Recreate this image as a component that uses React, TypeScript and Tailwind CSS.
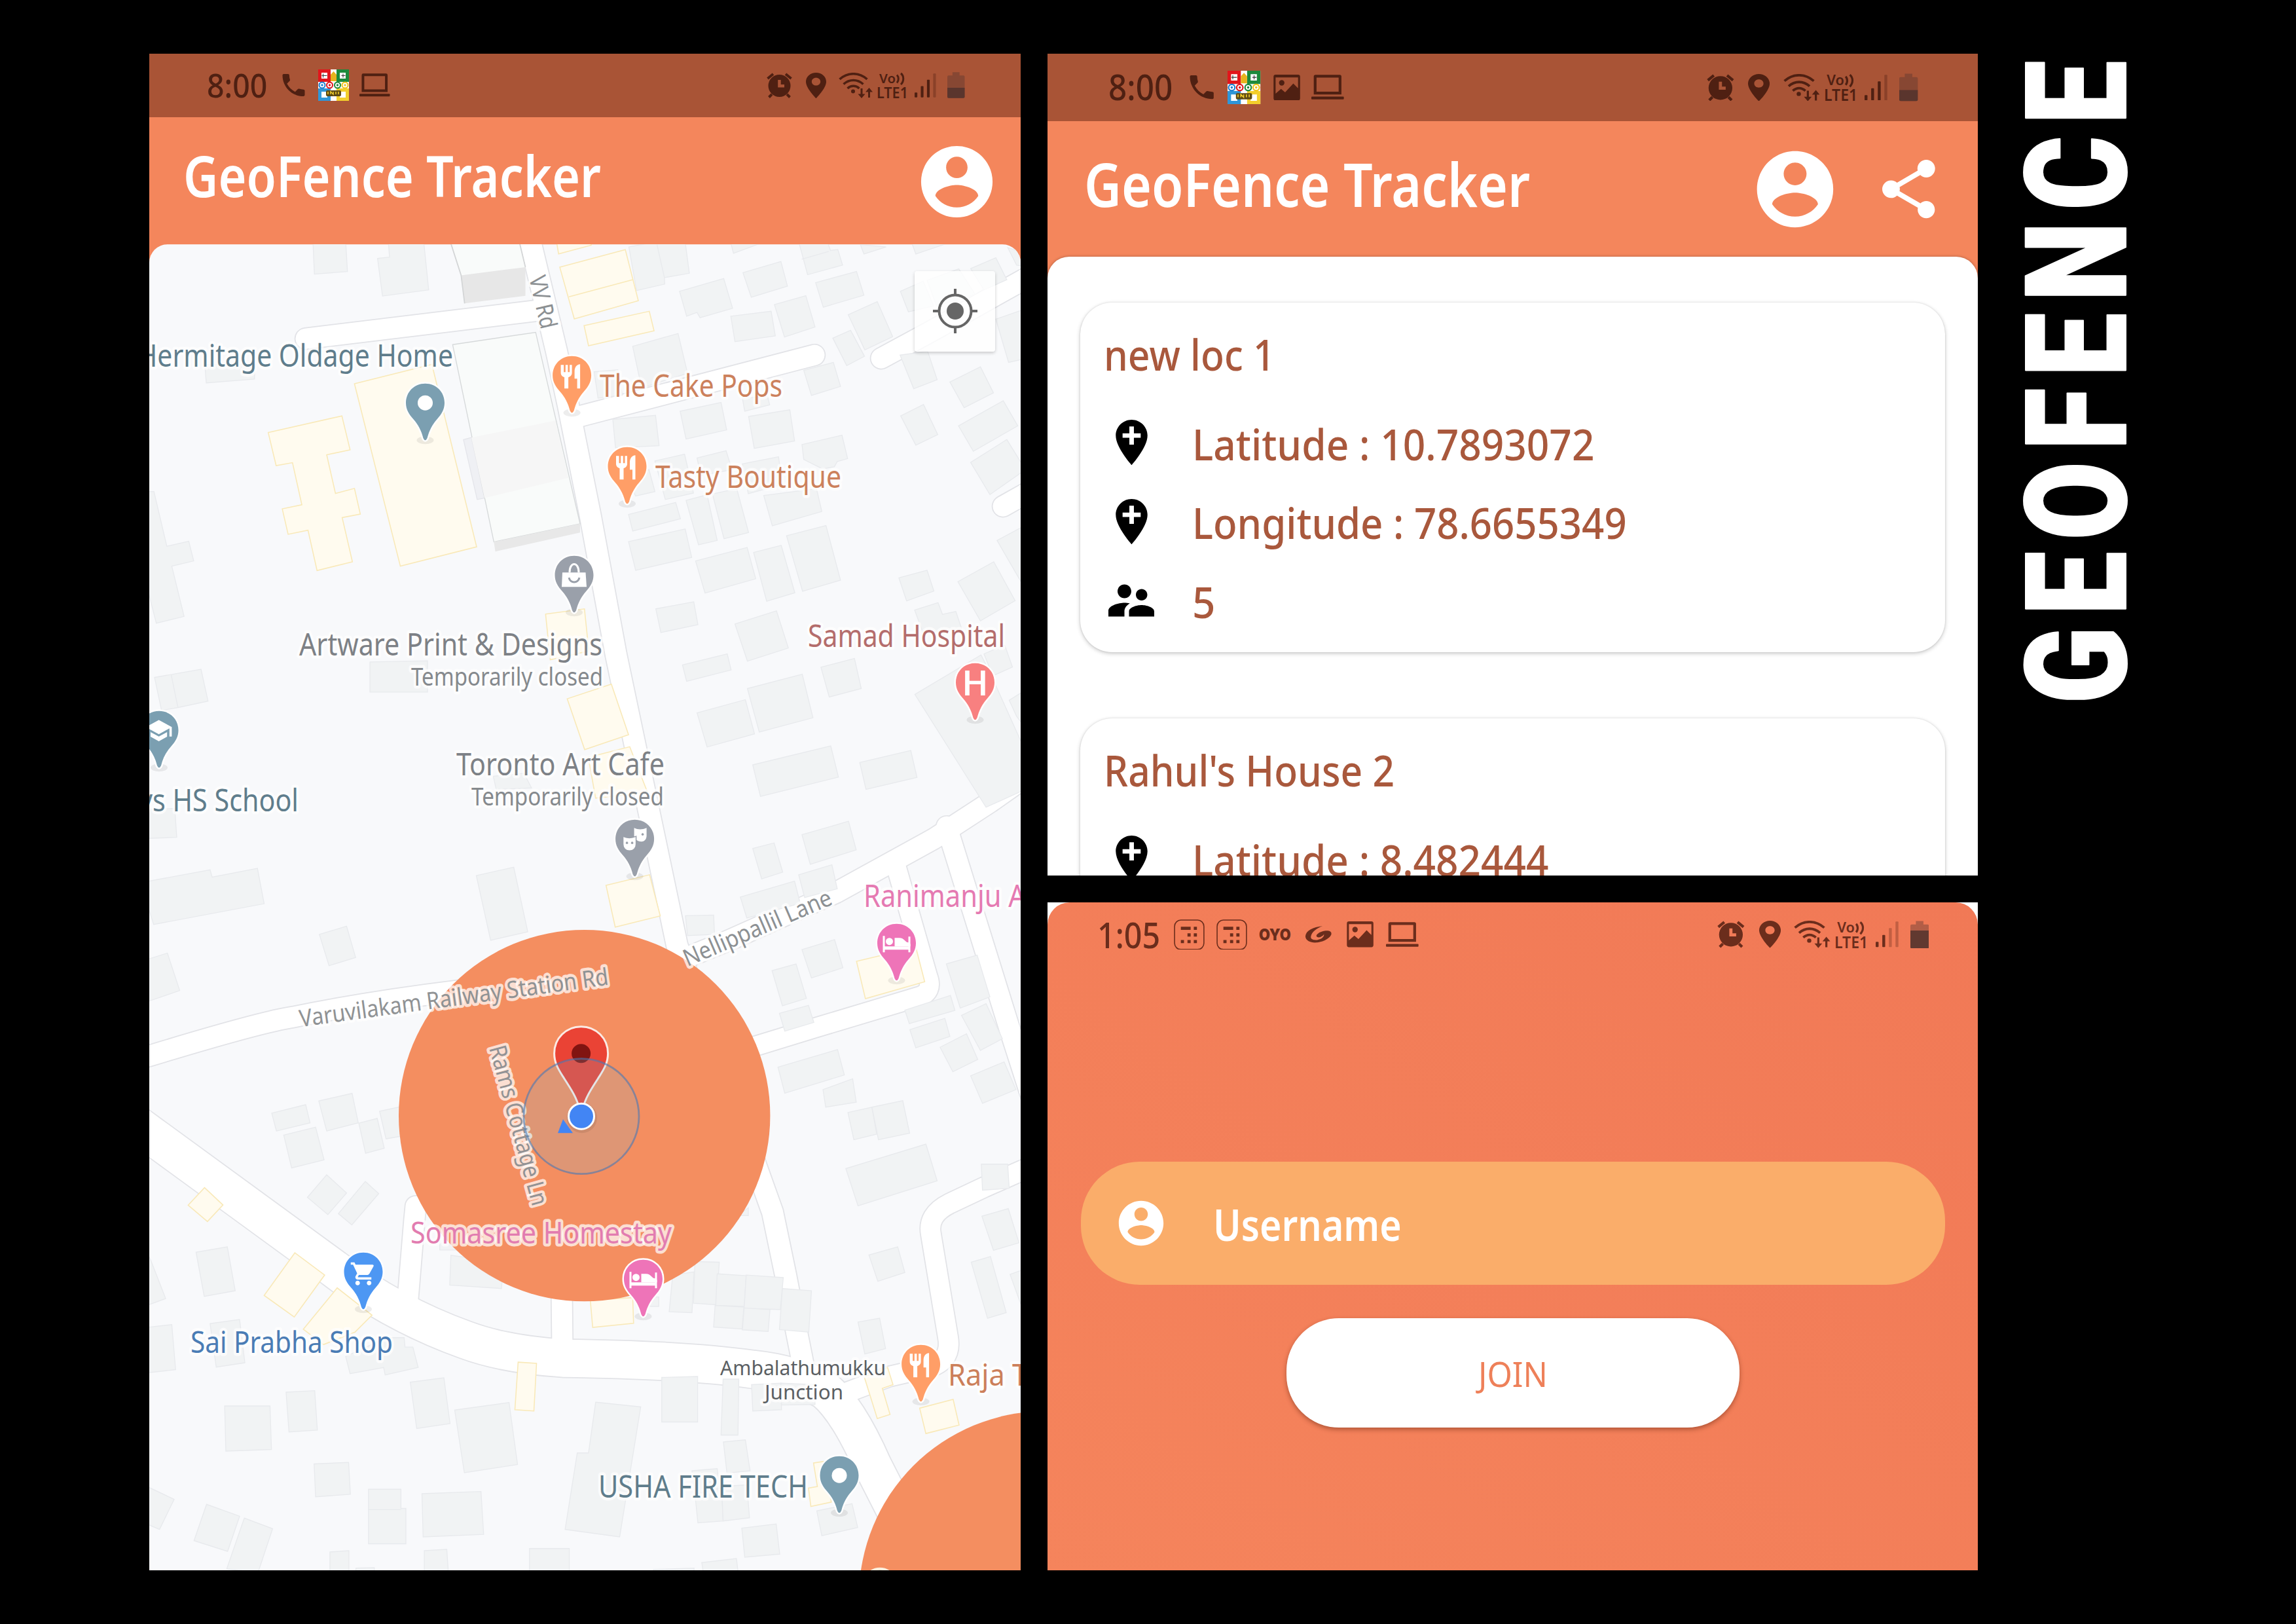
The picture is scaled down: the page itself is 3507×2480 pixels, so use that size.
import { useLayoutEffect, useRef, useState } from "react";
import type { ReactNode } from "react";

const FONT = "'Noto Sans', 'Open Sans', sans-serif";

/* One line of text, condensed horizontally so that it fills its box. */
function FitText({ children, className }: { children: string; className: string }) {
  const box = useRef<HTMLSpanElement>(null);
  const line = useRef<HTMLSpanElement>(null);
  const [scale, setScale] = useState(1);
  useLayoutEffect(() => {
    if (box.current && line.current) {
      setScale(box.current.clientWidth / line.current.offsetWidth);
    }
  }, []);
  return (
    <span ref={box} className={`block shrink-0 leading-none ${className}`}>
      <span
        ref={line}
        className="inline-block origin-left whitespace-nowrap"
        style={{ transform: `scaleX(${scale})` }}
      >
        {children}
      </span>
    </span>
  );
}

/* ---------- shared icons ---------- */

function AccountIcon({ className }: { className: string }) {
  return (
    <svg viewBox="0 0 24 24" className={className} fill="currentColor">
      <path d="M12 2C6.48 2 2 6.48 2 12s4.48 10 10 10 10-4.48 10-10S17.52 2 12 2zm0 3c1.66 0 3 1.34 3 3s-1.34 3-3 3-3-1.34-3-3 1.34-3 3-3zm0 14.2c-2.5 0-4.71-1.28-6-3.22.03-1.99 4-3.08 6-3.08 1.99 0 5.97 1.09 6 3.08-1.29 1.94-3.5 3.22-6 3.22z" />
    </svg>
  );
}

function ShareIcon({ className }: { className: string }) {
  return (
    <svg viewBox="3 2 18 20" className={className} fill="currentColor">
      <path d="M18 16.08c-.76 0-1.44.3-1.96.77L8.91 12.7c.05-.23.09-.46.09-.7s-.04-.47-.09-.7l7.05-4.11c.54.5 1.25.81 2.04.81 1.66 0 3-1.34 3-3s-1.34-3-3-3-3 1.34-3 3c0 .24.04.47.09.7L8.04 9.81C7.5 9.31 6.79 9 6 9c-1.66 0-3 1.34-3 3s1.34 3 3 3c.79 0 1.5-.31 2.04-.81l7.12 4.16c-.05.21-.08.43-.08.65 0 1.61 1.31 2.92 2.92 2.92s2.92-1.31 2.92-2.92-1.31-2.92-2.92-2.92z" />
    </svg>
  );
}

function AddLocationIcon() {
  return (
    <svg viewBox="0 0 24 24" className="mb-[4px] size-[83px] shrink-0" fill="#000">
      <path d="M12 2C8.14 2 5 5.14 5 9c0 5.25 7 13 7 13s7-7.75 7-13c0-3.86-3.14-7-7-7zm4 8h-3v3h-2v-3H8V8h3V5h2v3h3v2z" />
    </svg>
  );
}

function PeopleIcon() {
  return (
    <svg viewBox="0 0 24 24" className="mb-[3px] size-[84px] shrink-0" fill="#000">
      <path d="M16.5 12c1.38 0 2.49-1.12 2.49-2.5S17.88 7 16.5 7C15.12 7 14 8.12 14 9.5s1.12 2.5 2.5 2.5zM9 11c1.66 0 2.99-1.34 2.99-3S10.66 5 9 5C7.34 5 6 6.34 6 8s1.34 3 3 3zm7.5 3c-1.83 0-5.5.92-5.5 2.75V19h11v-2.25c0-1.83-3.67-2.75-5.5-2.75zM9 13c-2.33 0-7 1.17-7 3.5V19h7v-2.25c0-.85.33-2.34 2.37-3.47C10.5 13.1 9.66 13 9 13z" />
    </svg>
  );
}

/* ---------- status bar (sized in em so it scales with its panel) ---------- */

function PhoneIcon() {
  return (
    <svg viewBox="3 3 18 18" className="h-[0.34em] w-[0.35em]" fill="currentColor">
      <path d="M6.62 10.79c1.44 2.83 3.76 5.14 6.59 6.59l2.2-2.2c.27-.27.67-.36 1.02-.24 1.12.37 2.33.57 3.57.57.55 0 1 .45 1 1V20c0 .55-.45 1-1 1-9.39 0-17-7.61-17-17 0-.55.45-1 1-1h3.5c.55 0 1 .45 1 1 0 1.25.2 2.45.57 3.57.11.35.03.74-.25 1.02l-2.2 2.2z" />
    </svg>
  );
}

function LudoIcon() {
  return (
    <svg viewBox="0 0 47 48" className="h-[0.48em] w-[0.47em]">
      <rect width="47" height="48" fill="#fff" />
      <rect width="19" height="19" fill="#e2151b" />
      <rect x="28" width="19" height="19" fill="#1d8a3c" />
      <rect y="29" width="19" height="19" fill="#2f96d8" />
      <rect x="28" y="29" width="19" height="19" fill="#f3cf2c" />
      <path d="M5 5h9v9H5zM33 5h9v9h-9zM5 34h9v9H5zM33 34h9v9h-9z" fill="#fff" />
      <path d="M7.500 6.500v6M5.500 9.500h8M35.500 9.500h6M38 6.500v6" stroke="#333" strokeWidth="1" />
      <path d="M19 8l4.500-5 4.500 5v10h-9z" fill="#e8b21d" />
      <circle cx="6" cy="24" r="5.500" fill="#1d7fd0" />
      <circle cx="17.500" cy="24" r="5.500" fill="#e2151b" />
      <circle cx="29.500" cy="24" r="5.500" fill="#1d8a3c" />
      <circle cx="41" cy="24" r="5.500" fill="#f0c419" />
      <g fill="none" stroke="#fff" strokeWidth="1.800">
        <circle cx="6" cy="24" r="2.600" />
        <circle cx="17.500" cy="24" r="2.600" />
        <circle cx="29.500" cy="24" r="2.600" />
        <circle cx="41" cy="24" r="2.600" />
      </g>
      <rect x="12" y="32" width="23" height="9" rx="2" fill="#5d4a12" />
      <path d="M15 38v-4M19 38v-4l4 4v-4M27 38v-4M31 34v4" stroke="#f3cf2c" strokeWidth="1.500" />
    </svg>
  );
}

function LaptopIcon() {
  return (
    <svg viewBox="0 0 47 36" className="h-[0.36em] w-[0.465em]" fill="currentColor">
      <path fillRule="evenodd" d="M6 0h35a2.500 2.500 0 0 1 2.500 2.500v26H3.500v-26A2.500 2.500 0 0 1 6 0zm1.500 4v20.500h32V4z" />
      <rect y="31.500" width="47" height="4" rx="1" />
    </svg>
  );
}

function PictureIcon() {
  return (
    <svg viewBox="0 0 39 38" className="h-[0.37em] w-[0.385em]" fill="currentColor">
      <path
        fillRule="evenodd"
        d="M3 0h33a3 3 0 0 1 3 3v32a3 3 0 0 1-3 3H3a3 3 0 0 1-3-3V3a3 3 0 0 1 3-3zm0 4v24l8-7 6 5 12-13 7 7V4z"
      />
      <circle cx="12" cy="12" r="4" />
    </svg>
  );
}

function KeypadIcon() {
  return (
    <svg viewBox="0 0 44 44" className="h-[0.44em] w-[0.44em]" fill="currentColor">
      <rect x="1" y="1" width="42" height="42" rx="9" fill="none" stroke="currentColor" strokeWidth="1.500" />
      <rect x="10" y="10.500" width="14" height="4.500" />
      <path d="M28.500 10.500H33V15h-4.500zM19.500 20H24v4.500h-4.500zM28.500 20H33v4.500h-4.500zM10 29.500h4.500V34H10zM19.500 29.500H24V34h-4.500zM28.500 29.500H33V34h-4.500z" />
    </svg>
  );
}

function SwirlIcon() {
  return (
    <svg viewBox="0 0 40 25" className="h-[0.25em] w-[0.39em]" fill="currentColor">
      <path d="M26 0C12 1 2 7 1 14c-1 7 8 11 17 10 11-1 21-8 21-13 0-4-5-5-10-4-6 1-11 4-12 7 0 2 3 3 6 2 2-1 4-2 5-4 1 3-3 7-9 8-6 1-11-1-10-5C10 9 17 3 26 0z" />
    </svg>
  );
}

function AlarmIcon() {
  return (
    <svg viewBox="0 0 41 39" className="h-[0.39em] w-[0.41em]" fill="none" stroke="currentColor">
      <path d="M2.500 9 11 2M38.500 9 30 2" strokeWidth="4" />
      <path d="M9 33l-4.500 4.500M32 33l4.500 4.500" strokeWidth="4" />
      <path
        fillRule="evenodd"
        stroke="none"
        fill="currentColor"
        d="M20.500 3a17 17 0 1 1 0 34 17 17 0 0 1 0-34zm-2.300 8v11.500H28V18h-5.300v-7z"
      />
    </svg>
  );
}

function PlaceIcon() {
  return (
    <svg viewBox="5 2 14 20" preserveAspectRatio="none" className="h-[0.39em] w-[0.31em]" fill="currentColor">
      <path d="M12 2C8.130 2 5 5.130 5 9c0 5.250 7 13 7 13s7-7.750 7-13c0-3.870-3.130-7-7-7zm0 10c-1.700 0-3-1.300-3-3s1.300-3 3-3 3 1.300 3 3-1.300 3-3 3z" />
    </svg>
  );
}

function WifiIcon() {
  return (
    <svg viewBox="0 0 52 39" className="h-[0.39em] w-[0.52em]" fill="none" stroke="currentColor" strokeWidth="3.600">
      <path d="M1.500 10C14-1 31-1 43.500 10" />
      <path d="M7.500 17.500c9-8 21-8 30 0" />
      <path d="M13.500 24c5.500-5 12.500-5 18 0" />
      <circle cx="22" cy="28.500" r="3" fill="currentColor" stroke="none" />
      <path d="M35 24v12M46.500 38V26" strokeWidth="3" />
      <path d="M29.500 32.500h11L35 39zM41 29.500h11L46.500 23z" fill="currentColor" stroke="none" />
    </svg>
  );
}

function VoLteIcon() {
  return (
    <svg viewBox="0 0 48 40" className="h-[0.4em] w-[0.48em] overflow-visible" fill="currentColor">
      <text x="4" y="17" fontFamily={FONT} fontWeight="600" fontSize="20" textLength="25" lengthAdjust="spacingAndGlyphs">
        Vo
      </text>
      <path d="M31 5.500c3 3 3 9 0 12M37 3c5 4 5 12 0 17" transform="translate(0 -1)" fill="none" stroke="currentColor" strokeWidth="3" />
      <text x="0" y="39.500" fontFamily={FONT} fontWeight="600" fontSize="23" textLength="48" lengthAdjust="spacingAndGlyphs">
        LTE1
      </text>
    </svg>
  );
}

function SignalIcon({ bars }: { bars: number }) {
  return (
    <svg viewBox="0 0 34 37" className="h-[0.37em] w-[0.335em]" fill="currentColor">
      {[0, 1, 2, 3].map((i) => (
        <rect
          key={i}
          x={i * 9.6}
          y={[29.500, 19.500, 9.500, 0][i]}
          width="4.200"
          height={[7.500, 17.500, 27.500, 37][i]}
          rx="1"
          opacity={i < bars ? 1 : 0.35}
        />
      ))}
    </svg>
  );
}

function BatteryIcon({ empty }: { empty: number }) {
  return (
    <svg viewBox="0 0 27 40" className="h-[0.4em] w-[0.265em]">
      <path d="M8 0h11v5h6a2 2 0 0 1 2 2v31a2 2 0 0 1-2 2H2a2 2 0 0 1-2-2V7a2 2 0 0 1 2-2h6z" fill="#54343066" />
      <path d={`M0 ${empty}h27V38a2 2 0 0 1-2 2H2a2 2 0 0 1-2-2z`} fill="#52332d" opacity="0.85" />
    </svg>
  );
}

function StatusRight({ bars, empty }: { bars: number; empty: number }) {
  return (
    <div className="ml-auto flex items-center">
      <AlarmIcon />
      <span className="w-[0.195em]" />
      <PlaceIcon />
      <span className="w-[0.19em]" />
      <WifiIcon />
      <span className="w-[0.06em]" />
      <VoLteIcon />
      <span className="w-[0.105em]" />
      <SignalIcon bars={bars} />
      <span className="w-[0.165em]" />
      <BatteryIcon empty={empty} />
    </div>
  );
}

function AppHeader({ picture, share }: { picture?: boolean; share?: boolean }) {
  return (
    <>
      <div className="flex h-[0.967em] items-center bg-[#a95436] pr-[0.855em] pl-[0.875em] text-[#4f2012]">
        <div className="w-[0.915em] pb-[0.02em]">
          <div className="text-[0.51em] font-medium">
            <FitText className="w-full">8:00</FitText>
          </div>
        </div>
        <span className="w-[0.24em]" />
        <PhoneIcon />
        <span className="w-[0.2em]" />
        <LudoIcon />
        {picture && (
          <>
            <span className="w-[0.18em]" />
            <PictureIcon />
          </>
        )}
        <span className="w-[0.16em]" />
        <LaptopIcon />
        <StatusRight bars={3} empty={24} />
      </div>
      <div className="flex h-[1.94em] items-center bg-[#f4865c] pl-[0.52em] text-white">
        <div className="w-[6.38em] pb-[0.15em]">
          <div className="text-[0.86em] font-[560]">
            <FitText className="w-full">GeoFence Tracker</FitText>
          </div>
        </div>
        <div className={share ? "ml-auto flex items-center pt-[0.01em] pr-[0.61em]" : "ml-auto flex items-center pt-[0.03em] pr-[0.32em]"}>
          <AccountIcon className="size-[1.31em]" />
          {share && <ShareIcon className="ml-[0.59em] h-[0.84em] w-[0.756em]" />}
        </div>
      </div>
    </>
  );
}

/* ---------- map ---------- */

type Tile = { x: number; y: number; sx: number; sy: number; grey: string[]; shop: string[]; seams?: string };

const TILES: Tile[] = [
  {
    x: 220, y: 360, sx: 0.4464, sy: 0.4464,
    grey: [
      "578,20 690,20 696,122 583,131",
      "836,20 840,73 799,77 816,206 974,185 957,20",
      "208,440 380,440 378,490 213,503",
      "10,875 34,875 78,1062 153,1045 170,1112 95,1130 137,1302 42,1325 10,1200",
    ],
    shop: [
      "425,673 677,616 705,732 625,749 655,881 720,864 740,952 678,964 713,1115 592,1145 561,1007 493,1021 473,934 540,920 508,776 452,786",
      "720,506 985,440 1138,1064 877,1130",
      "1374,1294 1507,1276 1522,1420 1390,1450",
    ],
  },
  {
    x: 860, y: 360, sx: 0.4528, sy: 0.4464,
    grey: [
      "222,38 317,20 412,20 426,128 342,143 343,165 248,187",
      "565,20 660,28 575,60", "795,20 892,20 902,50 927,47 943,100 825,133",
      "1003,30 1090,38 1015,62", "1175,20 1290,28 1190,62",
      "607,126 735,88 757,172 635,210", "393,190 542,146 572,248 462,280 452,262 417,275",
      "852,160 990,122 1015,203 878,244", "713,235 819,205 850,312 747,346",
      "566,275 702,258 716,342 580,362", "962,270 1060,225 1112,345 1018,390",
      "910,350 970,323 1017,412 957,444", "235,378 388,334 420,470 265,520",
      "105,465 185,458 200,545 118,555", "812,460 912,433 936,515 838,546",
      "1138,190 1215,155 1250,240 1165,260", "1228,152 1335,113 1390,200 1260,240",
      "1375,112 1460,75 1497,150 1420,185", "1500,40 1560,60 1560,105 1530,100",
      "1460,285 1560,250 1560,420 1503,433", "1137,408 1230,395 1262,492 1183,523",
      "1305,500 1408,448 1452,537 1353,588", "1139,616 1216,577 1264,680 1190,716",
      "1334,650 1485,564 1534,650 1384,737", "1375,775 1497,697 1560,800 1440,885",
      "605,555 690,550 697,578 613,600", "168,628 312,614 324,718 177,725",
      "395,600 533,570 552,664 415,695", "626,618 765,595 781,702 645,727",
      "806,714 941,682 960,762 925,772 915,790 875,797 812,765",
      "310,770 410,747 440,880 345,902", "215,830 290,800 310,875 245,890",
      "452,760 550,735 570,800 465,820", "605,780 727,756 740,850 625,882",
      "221,953 380,912 396,968 235,1010", "415,905 486,886 520,1042 457,1057",
      "504,883 586,865 626,1015 543,1036", "677,888 855,865 873,943 706,992",
      "221,1046 412,1003 434,1100 245,1144", "447,1112 621,1066 650,1173 479,1222",
      "643,1083 736,1059 782,1221 687,1250", "754,1026 887,991 936,1178 808,1216",
      "1133,1170 1228,1144 1251,1215 1159,1249", "1332,1183 1453,1115 1525,1248 1408,1317",
      "1464,1042 1560,990 1560,1210", "1186,1280 1265,1255 1280,1295 1325,1285 1345,1345 1215,1360",
      "313,1276 441,1252 455,1330 330,1357", "580,1328 720,1283 760,1410 622,1455",
      "403,1468 554,1430 567,1485 417,1524", "1420,1430 1490,1400 1516,1475 1450,1505",
    ],
    shop: ["-22,20 -15,62 95,32 95,20", "-11,107 210,47 254,222 38,284", "71,307 291,258 307,325 86,376"],
    seams: "M317 30 342 143M805 80 897 53",
  },
  {
    x: 220, y: 1000, sx: 0.4464, sy: 0.4464,
    grey: [
      "36,77 195,49 219,158 116,180 60,190", "773,24 970,20 970,127 773,127",
      "0,530 105,525 112,624 0,628", "1195,415 1300,405 1326,455 1205,460",
      "10,775 226,735 233,760 388,730 411,851 33,922 10,850", "1137,755 1265,726 1313,947 1186,976",
      "600,956 693,928 724,1035 633,1063", "0,1045 80,1020 122,1148 0,1190",
    ],
    shop: [],
    seams: "M93 68 116 180",
  },
  {
    x: 860, y: 1000, sx: 0.4528, sy: 0.4464,
    grey: [
      "622,115 807,66 843,215 662,264", "452,198 615,153 646,270 486,315",
      "870,42 983,12 1006,115 898,144", "1187,135 1410,0 1440,60 1560,330 1560,460 1427,521",
      "1505,155 1560,120 1560,250 1530,210", "640,376 903,311 929,418 666,484",
      "1001,368 1173,327 1194,419 1022,460", "640,662 712,643 741,743 670,766",
      "806,615 963,569 989,667 834,716", "598,828 781,774 800,850 620,900",
      "795,752 907,718 925,800 815,830", "413,892 508,890 511,956 420,960",
      "806,1008 916,974 944,1070 838,1105", "705,1080 786,1057 821,1175 740,1200",
      "730,1226 828,1199 846,1257 748,1287", "1153,1215 1307,1165 1322,1216 1168,1261",
      "1170,1282 1288,1243 1305,1305 1190,1344", "1293,1057 1397,1027 1440,1170 1340,1208",
      "1344,1233 1427,1193 1482,1313 1408,1353", "1272,1342 1361,1296 1399,1384 1315,1426",
      "1375,1440 1488,1392 1528,1487 1415,1534", "725,1410 926,1350 949,1437 748,1499",
      "877,1487 977,1450 989,1530 886,1547",
    ],
    shop: [
      "14,150 163,100 221,273 73,324", "85,350 225,314 285,470 110,490",
      "145,788 292,752 328,893 176,931", "990,1048 1190,1000 1220,1118 1020,1176",
    ],
  },
  {
    x: 220, y: 1660, sx: 0.4464, sy: 0.4783,
    grey: [
      "437,83 553,56 568,114 453,140", "598,44 712,20 733,114 625,140",
      "478,153 587,128 616,232 505,258", "735,115 798,100 822,195 758,211",
      "806,77 880,62 890,155 828,165", "625,280 693,338 629,407 559,352",
      "757,301 803,340 711,440 665,404", "178,527 285,510 312,650 206,668",
      "10,530 22,550 74,675 10,697", "10,767 95,758 108,902 10,912",
      "226,755 327,742 345,880 247,894",
      "690,860 830,800 890,800 893,830 920,830 938,895 825,919 820,895 705,915",
      "1012,490 1060,490 1075,520 1012,520", "1050,537 1230,560 1223,643 1046,632",
      "911,942 1026,928 1047,1074 933,1090", "1063,1031 1249,1007 1278,1205 1096,1231",
      "486,974 584,969 593,1095 496,1101", "276,1018 431,1018 436,1157 280,1162",
      "582,1203 700,1198 706,1300 587,1308",
      "768,1284 879,1284 879,1345 896,1345 896,1458 768,1458",
      "951,1298 1153,1291 1162,1428 955,1436", "10,1275 103,1316 53,1412 10,1395",
      "214,1332 327,1370 286,1482 171,1448", "343,1376 440,1410 390,1550 283,1538",
      "636,1484 701,1480 701,1560 636,1560", "725,1536 788,1534 788,1560 725,1560",
      "959,1480 1036,1476 1042,1560 959,1560", "1319,1473 1455,1473 1455,1560 1319,1560",
    ],
    shop: [
      "207,321 270,376 217,429 151,377", "516,529 618,600 514,734 411,665",
      "661,641 780,728 722,782 614,822 545,773", "1280,878 1343,882 1334,1034 1269,1030",
    ],
    seams: "M768 1349 879 1349",
  },
  {
    x: 860, y: 1660, sx: 0.4528, sy: 0.4783,
    grey: [
      "110,1006 262,1021 191,1436 7,1412 48,1168 86,1168",
      "961,81 1042,64 1058,150 981,168", "1042,64 1146,43 1169,147 1064,168",
      "954,260 1224,182 1262,299 995,379", "1411,246 1500,246 1505,323 1415,329",
      "1413,412 1502,388 1538,497 1452,521", "1377,559 1442,541 1495,720 1432,738",
      "1508,598 1560,580 1560,720 1543,690", "1032,536 1129,510 1153,592 1062,620",
      "995,750 1068,738 1088,835 1018,852", "590,410 625,385 625,410",
      "370,600 442,590 435,720 358,717", "445,557 527,559 518,695 440,690",
      "520,596 618,602 611,700 515,697", "618,600 743,608 733,710 611,707",
      "740,643 838,650 829,782 730,774", "513,697 610,702 604,772 508,766",
      "611,705 698,710 692,780 605,775", "333,927 454,924 454,1069 333,1069",
      "540,932 593,932 590,1111 533,1111", "636,950 735,945 737,1030 640,1034",
      "735,945 850,950 850,1013 737,1015", "541,1133 615,1126 631,1225 553,1232",
      "435,1225 520,1218 530,1290 445,1300", "445,1300 535,1280 540,1385 455,1391",
      "535,1275 620,1270 629,1375 540,1385", "603,1408 719,1395 731,1491 613,1501",
      "468,1518 585,1505 592,1560 475,1560", "856,1353 975,1330 994,1406 873,1432",
      "305,1540 442,1536 442,1560 305,1560", "290,670 323,670 323,700 290,700",
    ],
    shop: [
      "92,680 235,672 238,754 100,767",
      "1016,925 1095,895 1113,950 1077,962 1103,1045 1060,1058",
      "1203,1025 1316,997 1336,1079 1224,1106",
      "845,1200 880,1195 905,1325 836,1339 828,1280 858,1275",
    ],
  },
];

const ROADS: { d: string; w: number }[] = [
  { d: "M805 345 811 373 850 536 868 619 902 789 941 1000 1034 1443 1180 1851 1200 1947 1217 2035 1228 2090", w: 32 },
  { d: "M467 517 822 474", w: 31 },
  { d: "M880 637 1244 542", w: 31 },
  { d: "M1346 547 1420 507 1590 412", w: 31 },
  { d: "M1532 773 1600 735", w: 31 },
  { d: "M1020 1474 1113 1436 1277 1363 1426 1281 1512 1225 1600 1163", w: 31 },
  { d: "M1368 1320 1417 1491Q1426 1515 1403 1522L1243 1570 1080 1620", w: 29 },
  { d: "M1446 1262 1543 1574 1590 1720", w: 31 },
  { d: "M180 1626 229 1612Q400 1560 448 1553Q560 1530 698 1513L900 1490", w: 31 },
  { d: "M180 1696 229 1732 510 1937Q600 2006 711 2046 770 2068 860 2074 1041 2076 1150 2091 1215 2098 1260 2123 1295 2152 1333 2238L1390 2350", w: 57 },
  { d: "M635 1842 633 1862 622 1995", w: 31 },
  { d: "M858 1970 859 2060", w: 31 },
  { d: "M1270 2135 1358 2102 1410 2090Q1455 2082 1448 2042L1422 1885Q1416 1855 1450 1838L1503 1813 1600 1770", w: 30 },
];

const PIN_D = "M0 -29.500C17 -29.500 29.500 -16.500 29.500 0 29.500 10 25 17 18 25 11 33 6 42 3 54Q0 60 -3 54C-6 42 -11 33 -18 25 -25 17 -29.500 10 -29.500 0 -29.500 -16.500 -17 -29.500 0 -29.500Z";

const hole = <circle r="11.500" fill="#fff" />;
const food = (
  <g fill="#fff">
    <path d="M-17 -16v12c0 4 3 6 5.500 7v17h6V3C-3 2 0 0 0 -4v-12h-3.500v11h-2.700v-11h-3.600v11h-2.700v-11z" />
    <path d="M12.500 -17v37h-4.500V5H4V-6c0-6 3-11 8.500-11z" />
  </g>
);
const bag = (
  <g>
    <path d="M-18 -4H17.500l1.500 22h-38z" fill="#fff" />
    <path d="M-7 -4c0-17 14-17 14 0" fill="none" stroke="#fff" strokeWidth="3" />
    <path d="M-8 4c2 9 14 9 16 0" fill="none" stroke="#9aa0aa" strokeWidth="3" />
  </g>
);
const cap = (
  <path
    transform="translate(-22 -21) scale(1.800)"
    fill="#fff"
    d="M5 13.180v4L12 21l7-3.820v-4L12 17l-7-3.820zM12 3L1 9l11 6 9-4.910V17h2V9L12 3z"
  />
);
const bed = (
  <g fill="#fff">
    <path d="M-21 -11h3v16h36V1h3v13h-3V10h-36v4h-3z" />
    <circle cx="-11" cy="-2.500" r="5.500" />
    <path d="M-3 4v-12H4c8 0 9 7 14 7V-10h3v15h-24z" />
  </g>
);
const cart = (
  <path
    transform="translate(-21 -18) scale(1.750)"
    fill="#fff"
    d="M7 18c-1.100 0-1.990.9-1.990 2S5.900 22 7 22s2-.9 2-2-.9-2-2-2zM1 2v2h2l3.600 7.590-1.350 2.450c-.16.28-.25.61-.25.96 0 1.100.9 2 2 2h12v-2H7.420c-.14 0-.25-.11-.25-.25l.03-.12.9-1.630h7.450c.75 0 1.410-.41 1.750-1.030l3.580-6.490A1.003 1.003 0 0020 4H5.210l-.94-2H1zm16 16c-1.100 0-1.990.9-1.990 2s.89 2 1.990 2 2-.9 2-2-.9-2-2-2z"
  />
);
const masks = (
  <g>
    <path d="M-1 -17c6 3 12 3 19 0v12c0 6-4 9-8 9s-11-3-11-9z" fill="#fff" />
    <path d="M-18 -4c6 3 13 3 20 0v12c0 6-4 10-10 10s-10-4-10-10z" fill="#fff" stroke="#9aa0aa" strokeWidth="1.500" />
    <circle cx="-12" cy="6" r="1.800" fill="#9aa0aa" />
    <circle cx="-4" cy="6" r="1.800" fill="#9aa0aa" />
    <circle cx="12" cy="-7" r="1.800" fill="#9aa0aa" />
  </g>
);
const hospital = (
  <text x="0" y="20" textAnchor="middle" fontFamily="Roboto, sans-serif" fontWeight="500" fontSize="54" fill="#fff">
    H
  </text>
);

const PINS: { x: number; y: number; fill: string; glyph: ReactNode }[] = [
  { x: 649.5, y: 615, fill: "#7b9fb1", glyph: hole },
  { x: 873.6, y: 573, fill: "#ff9e67", glyph: food },
  { x: 958, y: 712, fill: "#ff9e67", glyph: food },
  { x: 877, y: 878, fill: "#9aa0aa", glyph: bag },
  { x: 243, y: 1115, fill: "#7b9fb1", glyph: cap },
  { x: 1489.5, y: 1042, fill: "#f88080", glyph: hospital },
  { x: 969.6, y: 1281, fill: "#9aa0aa", glyph: masks },
  { x: 1369.5, y: 1440, fill: "#ee74b8", glyph: bed },
  { x: 555, y: 1942, fill: "#4d97f3", glyph: cart },
  { x: 982.5, y: 1953, fill: "#ee74b8", glyph: bed },
  { x: 1406.6, y: 2083, fill: "#ff9e67", glyph: food },
  { x: 1282, y: 2253, fill: "#7b9fb1", glyph: hole },
];

type Label = { t: string; x: number; y: number; w: number; size: number; fill: string; rot?: number };

const LABELS: Label[] = [
  { t: "Hermitage Oldage Home", x: 210, y: 560, w: 482, size: 47, fill: "#5f7d8c" },
  { t: "The Cake Pops", x: 916, y: 606, w: 279, size: 47, fill: "#cc815c" },
  { t: "Tasty Boutique", x: 1001, y: 745, w: 284, size: 47, fill: "#cc815c" },
  { t: "Artware Print & Designs", x: 457, y: 1000.5, w: 463, size: 47, fill: "#7d8186" },
  { t: "Temporarily closed", x: 628, y: 1047, w: 293, size: 39, fill: "#85898d" },
  { t: "Samad Hospital", x: 1234, y: 987.5, w: 301, size: 47, fill: "#b46d6c" },
  { t: "Toronto Art Cafe", x: 697, y: 1184, w: 318, size: 47, fill: "#7d8186" },
  { t: "Temporarily closed", x: 720, y: 1230, w: 294, size: 39, fill: "#85898d" },
  { t: "ys HS School", x: 212, y: 1239, w: 244, size: 47, fill: "#5f7d8c" },
  { t: "Ranimanju A", x: 1319, y: 1385, w: 248, size: 47, fill: "#e57ab2" },
  { t: "Nellippallil Lane", x: 1050, y: 1476, w: 243, size: 36, fill: "#8c9093", rot: -23.2 },
  { t: "Varuvilakam Railway Station Rd", x: 459, y: 1568, w: 476, size: 36, fill: "#8f9294", rot: -7.8 },
  { t: "VV Rd", x: 808, y: 424, w: 82, size: 36, fill: "#8c9093", rot: 77 },
  { t: "Rams Cottage Ln", x: 747, y: 1600, w: 252, size: 36, fill: "#929294", rot: 74.7 },
  { t: "Somasree Homestay", x: 627, y: 1898.5, w: 399, size: 45, fill: "#e27cb0" },
  { t: "Sai Prabha Shop", x: 291, y: 2066, w: 309, size: 46, fill: "#4a7cb5" },
  { t: "Ambalathumukku", x: 1100, y: 2100, w: 253, size: 31, fill: "#5b5f63" },
  { t: "Junction", x: 1168, y: 2137, w: 120, size: 31, fill: "#5b5f63" },
  { t: "Raja T", x: 1448, y: 2116, w: 122, size: 46, fill: "#cc7f5a" },
  { t: "USHA FIRE TECH", x: 914, y: 2287, w: 320, size: 47, fill: "#5f7d8c" },
];

function MapCanvas() {
  return (
    <svg viewBox="228 373 1331 2025" className="block h-full w-full">
      <rect x="228" y="373" width="1331" height="2025" fill="#f8f9fb" />
      <g fill="none" strokeLinecap="round" strokeLinejoin="round">
        {ROADS.map((r) => (
          <path key={r.d} d={r.d} stroke="#e2e3e7" strokeWidth={r.w + 3.5} />
        ))}
        {ROADS.map((r) => (
          <path key={r.d} d={r.d} stroke="#fff" strokeWidth={r.w} />
        ))}
      </g>
      <g transform="translate(220 360) scale(0.4464)">
        <path d="M1050 20H1285L1305 107 1085 135Z" fill="#f9fbfa" />
        <path d="M1085 135 1305 107V205L1097 231Z" fill="#e7e7e7" />
        <path d="M1048 20 1085 135 1097 231M1284 20 1305 107" fill="none" stroke="#d3d5d6" strokeWidth="4" />
        <path d="M1093 697 1120 690 1165 897 1140 902Z" fill="#eff0f4" stroke="#e4e5ea" strokeWidth="3" />
        <path d="M1056 372 1340 330 1492 985 1197 1047Z" fill="#f9fbfa" stroke="#d6d9da" strokeWidth="3" />
        <path d="M1120 690 1408 632 1452 828 1165 897Z" fill="#f6f6f6" />
        <path d="M1197 1047 1492 985V1015L1202 1080Z" fill="#e8e8e8" />
      </g>
      {TILES.map((t) => (
        <g key={`${t.x}-${t.y}`} transform={`translate(${t.x} ${t.y}) scale(${t.sx} ${t.sy})`}>
          <g fill="#f1f3f4" stroke="#e8eaed" strokeWidth="3">
            {t.grey.map((p) => (
              <polygon key={p} points={p} />
            ))}
            {t.seams && <path d={t.seams} />}
          </g>
          <g fill="#fffbef" stroke="#f9e9b8" strokeWidth="3.500">
            {t.shop.map((p) => (
              <polygon key={p} points={p} />
            ))}
          </g>
        </g>
      ))}
      <path d="M869 453 966 427" stroke="#f9e9b8" strokeWidth="1.600" />

      <circle cx="892.700" cy="1703.500" r="283.700" fill="#f48e60" />
      <circle cx="1596" cy="2439" r="284" fill="#f48e60" />
      <circle cx="1344" cy="2420" r="24.500" fill="#c9b48c" stroke="#fbeedd" strokeWidth="4" />

      <g fontFamily={FONT} strokeLinejoin="round" stroke="#fff" strokeOpacity="0.72" strokeWidth="9">
        {LABELS.map((l) => (
          <text
            key={`${l.t}${l.y}`}
            x={l.x}
            y={l.y}
            fontSize={l.size}
            fill={l.fill}
            textLength={l.w}
            lengthAdjust="spacingAndGlyphs"
            className="[paint-order:stroke]"
            transform={l.rot ? `rotate(${l.rot} ${l.x} ${l.y})` : undefined}
          >
            {l.t}
          </text>
        ))}
      </g>

      {PINS.map((p) => (
        <g key={`${p.x}${p.y}`} transform={`translate(${p.x} ${p.y})`}>
          <ellipse cy="57" rx="13" ry="6" fill="#000" opacity="0.07" />
          <path d={PIN_D} fill={p.fill} stroke="#fff" strokeWidth="5" className="[paint-order:stroke]" />
          {p.glyph}
        </g>
      ))}

      <g transform="translate(887.600 1608.500)">
        <path
          d="M0 -41C23 -41 41 -23 41 0 41 14 35 24 28 35 17 52 6 68 3 84H-3C-6 68 -17 52 -28 35 -35 24 -41 14 -41 0 -41 -23 -23 -41 0 -41Z"
          fill="#ea4335"
          stroke="#fbeae4"
          strokeWidth="3"
        />
        <circle r="14.500" fill="#811411" />
      </g>
      <circle cx="888" cy="1704.500" r="88" fill="#64c8f0" fillOpacity="0.15" stroke="#4a78b4" strokeOpacity="0.6" strokeWidth="2.800" />
      <path d="M860 1709 852 1730H875Z" fill="#4285f4" />
      <circle cx="889" cy="1707" r="23" fill="#000" opacity="0.08" />
      <circle cx="888" cy="1704.500" r="19.500" fill="#4285f4" stroke="#fff" strokeWidth="3" />
    </svg>
  );
}

function LocateButton() {
  return (
    <button className="absolute top-[41px] right-[39px] flex size-[123px] items-center justify-center rounded-[4px] bg-white/80 shadow-[0_2px_5px_rgba(0,0,0,0.2)]">
      <svg viewBox="-35 -35 70 70" className="size-[70px]" fill="none" stroke="#666" strokeWidth="4">
        <circle r="24.500" />
        <circle r="13" fill="#666" stroke="none" />
        <path d="M0 -34V-24M0 24V34M-34 0H-24M24 0H34" />
      </svg>
    </button>
  );
}

function MapPhone() {
  return (
    <section className="flex h-[2316px] w-[1331px] flex-col overflow-hidden bg-[#f4865c] text-[100px]">
      <AppHeader />
      <div className="relative min-h-0 flex-1 overflow-hidden rounded-t-[28px]">
        <MapCanvas />
        <LocateButton />
      </div>
    </section>
  );
}

/* ---------- saved locations ---------- */

function Row({ icon, width, children }: { icon: ReactNode; width: string; children: string }) {
  return (
    <div className="flex h-[120.5px] items-center">
      <div className="flex w-[84px] shrink-0 justify-center">{icon}</div>
      <FitText className={`ml-[51px] ${width}`}>{children}</FitText>
    </div>
  );
}

function LocationCard({ title, titleWidth, children }: { title: string; titleWidth: string; children: ReactNode }) {
  return (
    <article className="h-[534px] shrink-0 rounded-[49px] bg-white pt-[46px] pl-[36px] text-[65.5px] font-medium text-[#a9583c] shadow-[0_2px_6px_rgba(0,0,0,0.22),0_0_3px_rgba(0,0,0,0.1)]">
      <div className="h-[109px]">
        <FitText className={titleWidth}>{title}</FitText>
      </div>
      {children}
    </article>
  );
}

function LocationsPhone() {
  return (
    <section className="flex h-[1255px] w-[1421px] flex-col overflow-hidden bg-[#f4865c] text-[106.75px]">
      <AppHeader picture share />
      <div className="flex min-h-0 flex-1 flex-col gap-[101px] overflow-hidden rounded-t-[33px] bg-white px-[50px] pt-[70px] shadow-[0_0_4px_rgba(0,0,0,0.3)]">
        <LocationCard title="new loc 1" titleWidth="w-[262px]">
          <Row icon={<AddLocationIcon />} width="w-[614px]">Latitude : 10.7893072</Row>
          <Row icon={<AddLocationIcon />} width="w-[664px]">Longitude : 78.6655349</Row>
          <Row icon={<PeopleIcon />} width="w-[35px]">5</Row>
        </LocationCard>
        <LocationCard title="Rahul's House 2" titleWidth="w-[444px]">
          <Row icon={<AddLocationIcon />} width="w-[545px]">Latitude : 8.482444</Row>
        </LocationCard>
      </div>
    </section>
  );
}

/* ---------- join screen ---------- */

function JoinPhone() {
  return (
    <section className="h-[1020px] w-[1421px] bg-white">
      <div className="flex h-full flex-col items-center rounded-t-[34px] bg-linear-to-tr from-[#f5845c] to-[#f17956] text-[106.75px]">
        <div className="flex h-[98px] w-full items-center pr-[0.7em] pl-[0.71em] text-[#6b2d1c]">
          <div className="w-[0.9em]">
            <div className="text-[0.51em] font-medium">
              <FitText className="w-full">1:05</FitText>
            </div>
          </div>
          <span className="w-[0.2em]" />
          <KeypadIcon />
          <span className="w-[0.17em]" />
          <KeypadIcon />
          <span className="w-[0.17em]" />
          <div className="w-[0.46em]">
            <div className="font-['Inter'] text-[0.23em] font-black">
              <FitText className="w-full">OYO</FitText>
            </div>
          </div>
          <span className="w-[0.19em]" />
          <SwirlIcon />
          <span className="w-[0.21em]" />
          <PictureIcon />
          <span className="w-[0.18em]" />
          <LaptopIcon />
          <StatusRight bars={2} empty={14} />
        </div>
        <div className="mt-[298px] flex h-[188px] w-[1320px] items-center rounded-[90px] bg-[#faad6a] pl-[51px] text-[67px] font-[560] text-white">
          <AccountIcon className="size-[82px]" />
          <FitText className="ml-[69px] w-[288px] pt-[3px]">Username</FitText>
        </div>
        <button className="mt-[51px] flex h-[167px] w-[692px] items-center justify-center rounded-[80px] bg-white text-[52px] text-[#ee8059] shadow-[0_3px_7px_rgba(90,30,10,0.45)]">
          <FitText className="w-[106px] pt-[2px]">JOIN</FitText>
        </button>
      </div>
    </section>
  );
}

function Wordmark() {
  return (
    <svg viewBox="0 0 160 980" className="mt-[8px] h-[980px] w-[160px] overflow-visible">
      <text
        transform="translate(156 985) rotate(-90)"
        fontFamily="Roboto, sans-serif"
        fontWeight="900"
        fontSize="215"
        textLength="1000"
        lengthAdjust="spacingAndGlyphs"
        className="tracking-[22px]"
        fill="#fff"
        stroke="#fff"
        strokeWidth="2"
        strokeLinejoin="round"
      >
        GEOFENCE
      </text>
    </svg>
  );
}

export default function App() {
  return (
    <main className="flex h-[2480px] w-[3507px] overflow-hidden bg-black pt-[82px] pl-[228px] font-['Noto_Sans',sans-serif]">
      <MapPhone />
      <div className="ml-[41px] flex flex-col gap-[41px]">
        <LocationsPhone />
        <JoinPhone />
      </div>
      <div className="ml-[70px]">
        <Wordmark />
      </div>
    </main>
  );
}
